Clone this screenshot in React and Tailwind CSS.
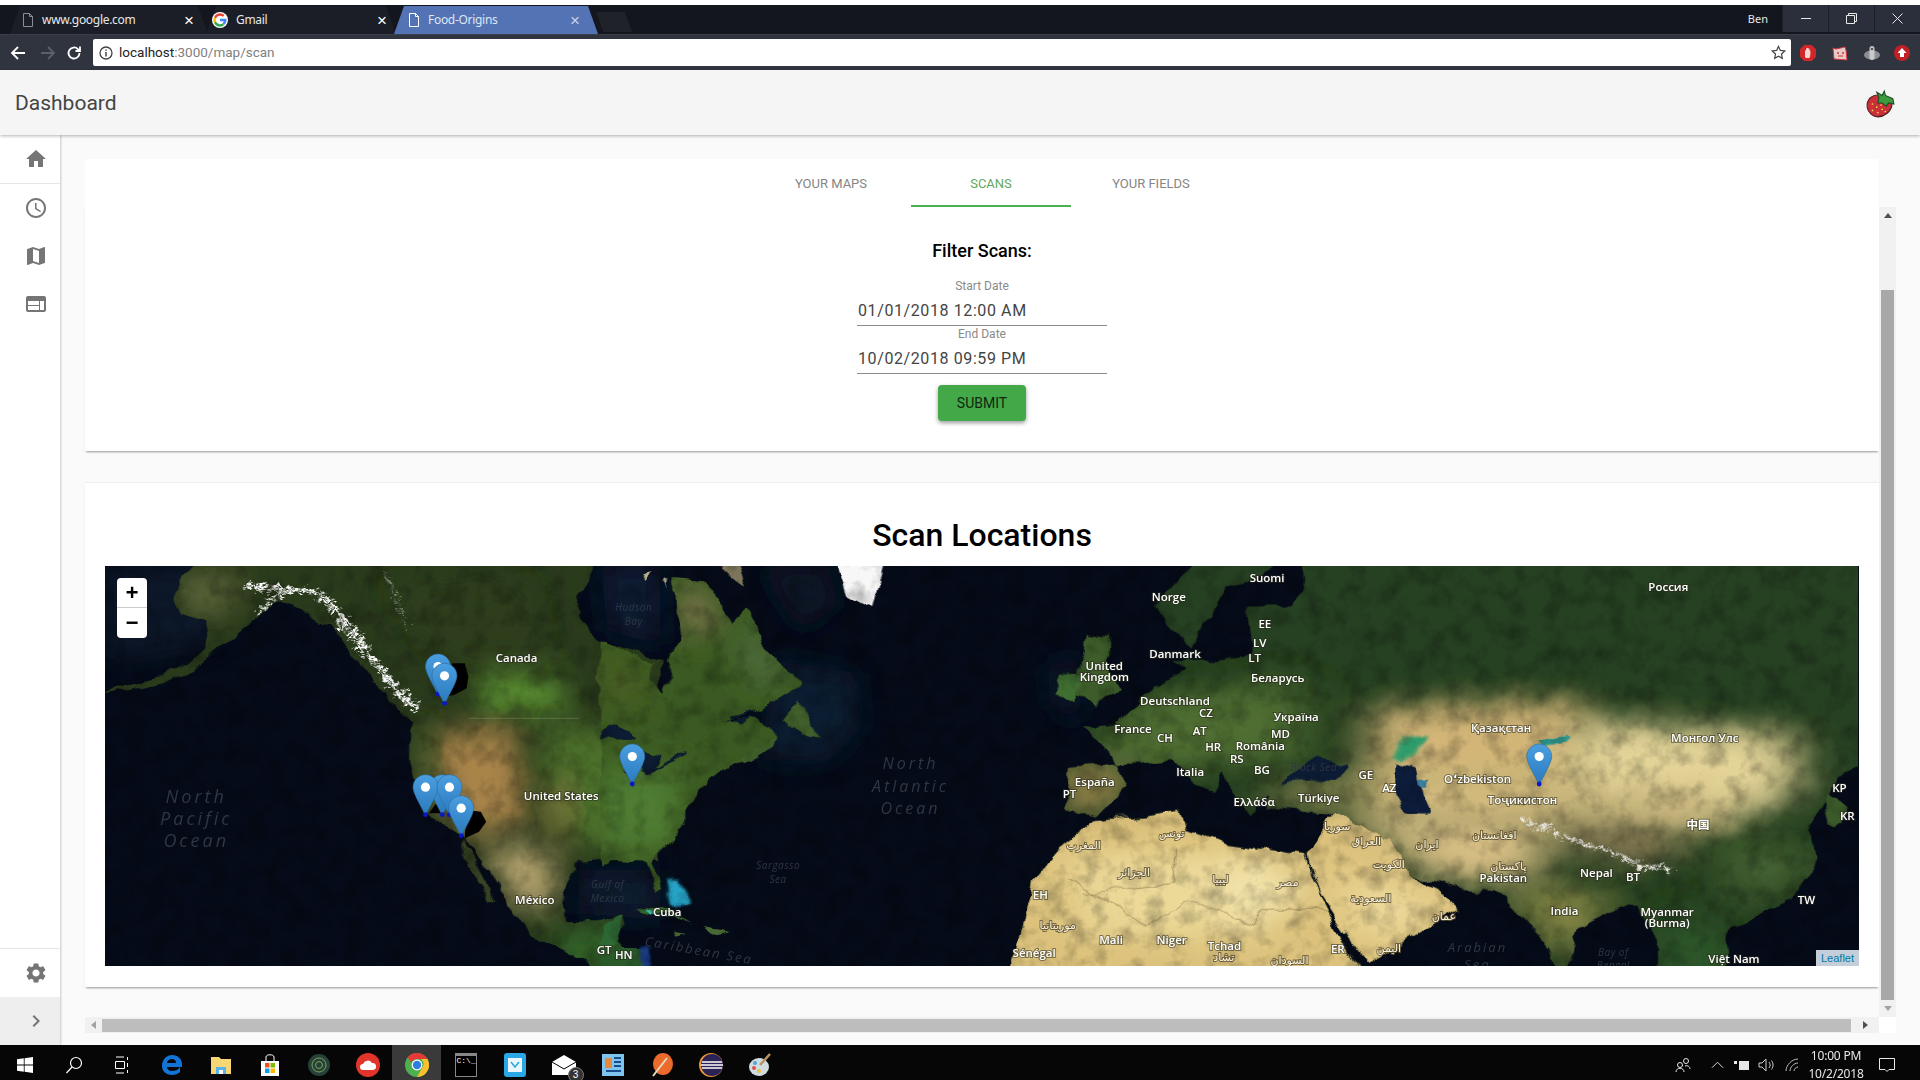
import React from "react";

const MAT = {
  home: "M10 20v-6h4v6h5v-8h3L12 3 2 12h3v8z",
  clock: "M11.99 2C6.47 2 2 6.48 2 12s4.47 10 9.99 10C17.52 22 22 17.52 22 12S17.52 2 11.99 2zM12 20c-4.42 0-8-3.58-8-8s3.58-8 8-8 8 3.58 8 8-3.58 8-8 8zm.5-13H11v6l5.25 3.15.75-1.23-4.5-2.67z",
  map: "M20.5 3l-.16.03L15 5.1 9 3 3.36 4.9c-.21.07-.36.25-.36.48V20.5c0 .28.22.5.5.5l.16-.03L9 18.9l6 2.1 5.64-1.9c.21-.07.36-.25.36-.48V3.5c0-.28-.22-.5-.5-.5zM15 19l-6-2.11V5l6 2.11V19z",
  web: "M20 4H4c-1.1 0-1.99.9-1.99 2L2 18c0 1.1.9 2 2 2h16c1.1 0 2-.9 2-2V6c0-1.1-.9-2-2-2zm-5 14H4v-4h11v4zm0-5H4V9h11v4zm5 5h-4V9h4v9z",
  settings: "M19.14 12.94c.04-.3.06-.61.06-.94 0-.32-.02-.64-.07-.94l2.03-1.58c.18-.14.23-.41.12-.61l-1.92-3.32c-.12-.22-.37-.29-.59-.22l-2.39.96c-.5-.38-1.03-.7-1.62-.94l-.36-2.54c-.04-.24-.24-.41-.48-.41h-3.84c-.24 0-.43.17-.47.41l-.36 2.54c-.59.24-1.13.57-1.62.94l-2.39-.96c-.22-.08-.47 0-.59.22L2.74 8.87c-.12.21-.08.47.12.61l2.03 1.58c-.05.3-.09.63-.09.94s.02.64.07.94l-2.03 1.58c-.18.14-.23.41-.12.61l1.92 3.32c.12.22.37.29.59.22l2.39-.96c.5.38 1.03.7 1.62.94l.36 2.54c.05.24.24.41.48.41h3.84c.24 0 .44-.17.47-.41l.36-2.54c.59-.24 1.13-.56 1.62-.94l2.39.96c.22.08.47 0 .59-.22l1.92-3.32c.12-.22.07-.47-.12-.61l-2.01-1.58zM12 15.6c-1.98 0-3.6-1.62-3.6-3.6s1.62-3.6 3.6-3.6 3.6 1.62 3.6 3.6-1.62 3.6-3.6 3.6z",
  chevron: "M10 6L8.59 7.41 13.17 12l-4.58 4.59L10 18l6-6z",
};

const MatIcon = ({ d }) => (
  <svg viewBox="0 0 24 24" className="w-6 h-6 fill-[#757575]">
    <path d={d} />
  </svg>
);

const FileIcon = ({ color }) => (
  <svg viewBox="0 0 12 14" className="w-3 h-3.5 shrink-0" fill="none" stroke={color} strokeWidth="1">
    <path d="M1.5 .5h6l3 3v10h-9zM7.5 .5v3h3" />
  </svg>
);

const GoogleG = () => (
  <svg viewBox="0 0 48 48" className="w-4 h-4 shrink-0">
    <circle cx="24" cy="24" r="24" fill="#fff" />
    <path fill="#ea4335" d="M24 11c3.400 0 6.300 1.200 8.500 3.300l5-5C34.200 6.200 29.500 4 24 4 16.200 4 9.500 8.500 6.200 15l5.800 4.500C13.600 14.600 18.400 11 24 11z" />
    <path fill="#4285f4" d="M43.500 24.500c0-1.400-.1-2.700-.4-4H24v7.600h11c-.5 2.500-1.900 4.600-4 6l5.800 4.500c3.500-3.200 6.700-8 6.700-14.100z" />
    <path fill="#fbbc05" d="M12 28.500c-.4-1.400-.7-2.900-.7-4.500s.3-3.100.7-4.500L6.200 15C4.800 17.700 4 20.800 4 24s.8 6.300 2.200 9z" />
    <path fill="#34a853" d="M24 44c5.400 0 10-1.800 12.800-4.900L31 34.600c-1.600 1.100-3.900 1.900-7 1.900-5.600 0-10.400-3.600-12-8.500L6.200 33C9.500 39.500 16.200 44 24 44z" />
  </svg>
);

const Tab = ({ width, pad, icon, title, active }) => (
  <div
    className={`h-[28px] flex items-center gap-[8px] -mr-[2px] [clip-path:polygon(0_100%,10px_0,calc(100%-10px)_0,100%_100%)] ${pad} ${
      active ? "bg-[#5373b4] text-[#dfe6f5]" : "bg-[#1b1e27] text-[#e8e8e8]"
    }`}
    style={{ width }}
  >
    {icon}
    <span className="flex-1 text-[12px] font-['Noto_Sans',sans-serif] tracking-[-0.3px]">{title}</span>
    <span className={`text-[17px] leading-none font-['Liberation_Sans',sans-serif] ${active ? "text-[#c6d2ea]" : "text-white"}`}>×</span>
  </div>
);

const WinButton = ({ children }) => (
  <div className="w-[46px] h-[27px] flex items-center justify-center border-l border-[#1c1f28] bg-[#2b2f3b]">{children}</div>
);

const ChromeBar = () => (
  <div className="shrink-0">
    <div className="h-[5px] bg-white" />
    <div className="h-[29px] bg-[#14161d] flex items-end pl-[10px]">
      <Tab width={198} pad="pl-[12px] pr-[14px]" icon={<FileIcon color="#8b8e96" />} title="www.google.com" />
      <Tab width={190} pad="pl-[6px] pr-[9px]" icon={<GoogleG />} title="Gmail" />
      <Tab width={204} pad="pl-[14px] pr-[18px]" active icon={<FileIcon color="#fff" />} title="Food-Origins" />
      <div className="w-[36px] h-[20px] mb-[2px] bg-[#1f2229] [clip-path:polygon(0_0,80%_0,100%_100%,20%_100%)]" />
      <div className="flex-1" />
      <span className="text-[11px] text-[#e8e8e8] font-['Noto_Sans',sans-serif] mr-[14px] self-center">Ben</span>
      <div className="flex self-start">
        <WinButton>
          <div className="w-[10px] h-px bg-[#e8e8e8]" />
        </WinButton>
        <WinButton>
          <svg viewBox="0 0 11 11" className="w-[11px] h-[11px]" fill="none" stroke="#e8e8e8">
            <path d="M.5 2.500h8v8h-8zM2.500 2.500v-2h8v8h-2" />
          </svg>
        </WinButton>
        <WinButton>
          <svg viewBox="0 0 11 11" className="w-[11px] h-[11px]" fill="none" stroke="#e8e8e8">
            <path d="M.5.5l10 10M10.500.5l-10 10" />
          </svg>
        </WinButton>
      </div>
    </div>
    <div className="h-[36px] bg-[#30343f] flex items-center border-t border-[#3b3f4b]">
      <svg viewBox="0 0 16 16" className="w-4 h-4 ml-[10px]" fill="none" stroke="#fff" strokeWidth="1.800">
        <path d="M15 8H2M8 2L2 8l6 6" />
      </svg>
      <svg viewBox="0 0 16 16" className="w-4 h-4 ml-[14px]" fill="none" stroke="#5b5f6a" strokeWidth="1.800">
        <path d="M1 8h13M8 2l6 6-6 6" />
      </svg>
      <svg viewBox="0 0 16 16" className="w-4 h-4 ml-[10px]" fill="none" stroke="#fff" strokeWidth="1.800">
        <path d="M13.500 8a5.500 5.500 0 1 1-1.600-3.900L14 6M14 1.500V6H9.500" />
      </svg>
      <div className="ml-[11px] w-[1698px] h-[27px] bg-white rounded-[2px] flex items-center pl-[6px] pr-[5px]">
        <svg viewBox="0 0 14 14" className="w-[14px] h-[14px] mr-[6px]" fill="none" stroke="#444">
          <circle cx="7" cy="7" r="6" strokeWidth="1.300" />
          <path d="M7 6v4.500M7 3.500v1.200" strokeWidth="1.500" />
        </svg>
        <span className="text-[13.5px] font-['Roboto',sans-serif] text-[#222]">localhost</span>
        <span className="text-[13.5px] font-['Roboto',sans-serif] text-[#808080]">:3000/map/scan</span>
        <div className="flex-1" />
        <svg viewBox="0 0 16 16" className="w-[15px] h-[15px]" fill="none" stroke="#444" strokeWidth="1.300">
          <path d="M8 1.500l2 4.300 4.700.6-3.500 3.200.9 4.700L8 12l-4.100 2.300.9-4.700L1.300 6.400 6 5.800z" />
        </svg>
      </div>
      <div className="flex items-center ml-[8px] gap-[14px]">
        <svg viewBox="0 0 18 18" className="w-[18px] h-[18px]">
          <path fill="#d3262b" d="M5.300 1h7.400L17 5.300v7.400L12.700 17H5.300L1 12.700V5.300z" />
          <path fill="#f3d7d2" d="M6 13V7c0-1 1-1 1 0V5c0-1 1-1 1 0V4.500c0-1 1.200-1 1.200 0V5c0-1 1.200-1 1.200 0v2c0-1 1-.8 1 0v3.500L10.500 14H7z" />
        </svg>
        <svg viewBox="0 0 18 18" className="w-[18px] h-[18px]">
          <path fill="#e9c9c6" stroke="#d0353a" d="M2 4l3 1 9-2 1 3 1 10-13-1z" />
          <circle cx="7" cy="9" r="1" fill="#d0353a" />
          <circle cx="12" cy="9" r="1" fill="#d0353a" />
          <path d="M7 12h5" stroke="#d0353a" />
        </svg>
        <svg viewBox="0 0 18 18" className="w-[18px] h-[18px]">
          <ellipse cx="9" cy="11" rx="8" ry="4.500" fill="#8d8f95" />
          <rect x="6.500" y="2" width="5" height="14" rx="2.500" fill="#c9c9cc" />
          <circle cx="9" cy="5" r="1.300" fill="#555" />
        </svg>
        <svg viewBox="0 0 18 18" className="w-[18px] h-[18px] -ml-[2px]">
          <circle cx="9" cy="9" r="8" fill="#bf2026" />
          <path fill="#fff" d="M9 4l4.500 5H11v4H7V9H4.500z" />
        </svg>
      </div>
    </div>
  </div>
);

const Strawberry = () => (
  <svg viewBox="0 0 28 28" className="w-[30px] h-[30px]">
    <path fill="#c9303a" stroke="#4a1f20" d="M5 8c4-3 9-3 13 0 5 0 8 4 7 8-1 5-7 10-13 10-4 0-9-3-10-9-.5-4 1-7 3-9z" />
    <path fill="#3c9a3f" stroke="#1d4d1f" d="M11 3l5 3 2-4 1 4 7 3 1 5-5-1-2 3-4-3-4 0 1-5z" />
    <g fill="#f2d34c">
      <circle cx="7" cy="14" r=".8" />
      <circle cx="11" cy="17" r=".8" />
      <circle cx="7" cy="20" r=".8" />
      <circle cx="12" cy="22" r=".8" />
      <circle cx="16" cy="19" r=".8" />
      <circle cx="19" cy="21" r=".8" />
      <circle cx="15" cy="15" r=".8" />
    </g>
  </svg>
);

// map data, traced from the reference in zoom coordinates
const Z7 = "translate(-5 -6) scale(0.35714 0.33333)";
const Z11 = "translate(495 -6) scale(0.33333 0.33333)";
const Z8 = "translate(895 -6) scale(0.56117 0.33333)";
const at7 = (x, y) => [100 + x / 2.8 - 105, 560 + y / 3 - 566];
const at11 = (x, y) => [600 + x / 3 - 105, 560 + y / 3 - 566];
const at8 = (x, y) => [1000 + x / 1.782 - 105, 560 + y / 3 - 566];

const NA_WEST = "205,120 225,50 300,-40 1400,-40 1345,100 1340,170 1385,240 1568,300 1568,900 1450,895 1340,905 1295,1000 1310,1080 1400,1085 1460,1060 1470,1090 1440,1130 1500,1300 1400,1300 1350,1190 1200,1130 1160,1050 1040,870 1010,830 910,760 870,600 870,490 810,420 740,340 650,190 500,130 400,210 300,300 170,370 15,405 15,395 170,350 300,270 290,190 205,150";
const BAJA = "1010,835 1040,890 1105,1030 1090,1020 1030,930";
const NA_EAST = "0,240 100,290 160,310 155,370 190,405 215,360 190,300 245,240 225,150 220,60 320,70 370,130 385,195 440,140 500,260 600,380 525,425 380,490 470,470 530,540 430,605 360,630 320,660 260,740 260,800 175,880 150,910 185,990 165,1000 135,905 40,900 0,920";
const EURASIA = "530,-40 1620,-40 1620,600 1530,620 1490,650 1470,730 1440,800 1450,900 1420,1000 1330,1090 1290,1130 1300,1300 1170,1300 1170,1140 1130,1040 1100,1040 1030,1100 1000,1300 980,1160 890,1000 820,990 790,970 730,950 640,820 590,760 480,745 480,700 445,770 420,720 400,640 380,700 330,640 310,600 250,610 220,610 120,620 115,750 170,770 220,680 190,570 150,500 210,490 260,400 330,330 310,300 400,300 450,280 440,130 520,130 540,90";
const SCANDI = "270,130 330,40 400,-40 530,-40 450,60 400,80 385,140 340,260 300,200";
const AFRICA = "5,1300 40,1080 60,960 110,860 170,780 250,770 320,755 330,810 400,850 460,865 540,885 570,1010 660,1300";
const ARABIA = "545,890 590,760 700,850 730,950 780,990 815,1050 740,1120 650,1210 570,1000";

const Blob = ({ points, fill, opacity = 1 }) => (
  <polygon points={points} fill={fill} opacity={opacity} filter="url(#soft)" />
);

const LABELS = [
  [at7, 1165, 292, "Canada"], [at7, 1290, 706, "United States"], [at7, 1216, 1018, "México"], [at7, 1410, 1168, "GT"], [at7, 1465, 1182, "HN"],
  [at11, 200, 1054, "Cuba"],
  [at8, 475, 52, "Suomi"], [at8, 300, 108, "Norge"], [at8, 471, 190, "EE"], [at8, 462, 248, "LV"], [at8, 453, 293, "LT"], [at8, 311, 280, "Danmark"],
  [at8, 185, 316, "United"], [at8, 185, 350, "Kingdom"], [at8, 494, 352, "Беларусь"], [at8, 311, 420, "Deutschland"], [at8, 366, 456, "CZ"], [at8, 527, 468, "Україна"],
  [at8, 236, 505, "France"], [at8, 293, 531, "CH"], [at8, 355, 511, "AT"], [at8, 379, 558, "HR"], [at8, 463, 556, "România"], [at8, 499, 520, "MD"], [at8, 421, 594, "RS"],
  [at8, 338, 634, "Italia"], [at8, 466, 628, "BG"], [at8, 168, 663, "España"], [at8, 123, 700, "PT"], [at8, 651, 642, "GE"], [at8, 693, 681, "AZ"], [at8, 567, 713, "Türkiye"],
  [at8, 452, 724, "Ελλάδα"], [at8, 892, 502, "Қазақстан"], [at8, 850, 654, "Oʻzbekiston"], [at8, 930, 718, "Тоҷикистон"], [at8, 1255, 531, "Монгол Улс"], [at8, 1190, 80, "Россия"],
  [at8, 1495, 682, "KP"], [at8, 1509, 767, "KR"], [at8, 1243, 792, "中国"], [at8, 1062, 936, "Nepal"], [at8, 1127, 950, "BT"], [at8, 896, 951, "Pakistan"], [at8, 1005, 1050, "India"],
  [at8, 1188, 1053, "Myanmar"], [at8, 1188, 1087, "(Burma)"], [at8, 1436, 1019, "TW"], [at8, 1307, 1195, "Việt Nam"], [at8, 197, 1137, "Mali"], [at8, 305, 1137, "Niger"], [at8, 399, 1157, "Tchad"],
  [at8, 60, 1176, "Sénégal"], [at8, 71, 1003, "EH"], [at8, 601, 1166, "ER"],
];

const ARABIC = [
  [305, 820, "تونس"], [148, 855, "المغرب"], [238, 938, "الجزائر"], [392, 958, "ليبيا"], [512, 968, "مصر"], [600, 800, "سوريا"], [652, 845, "العراق"], [692, 912, "الكويت"],
  [760, 852, "ایران"], [880, 825, "افغانستان"], [905, 918, "پاکستان"], [660, 1015, "السعودية"], [102, 1096, "موريتانيا"], [790, 1068, "عمان"], [692, 1165, "اليمن"], [515, 1200, "السودان"], [398, 1192, "تشاد"],
];

const SEAS = [
  [at7, 268, 708, "North", 18, 3], [at7, 268, 775, "Pacific", 18, 3], [at7, 268, 841, "Ocean", 18, 3],
  [at11, 930, 610, "North", 16, 3], [at11, 930, 678, "Atlantic", 16, 3], [at11, 930, 744, "Ocean", 16, 3],
  [at7, 1493, 142, "Hudson", 10, 0.5], [at7, 1493, 184, "Bay", 10, 0.5], [at7, 1420, 972, "Gulf of", 10, 0.5], [at7, 1420, 1013, "Mexico", 10, 0.5],
  [at11, 533, 915, "Sargasso", 10, 0.5], [at11, 533, 957, "Sea", 10, 0.5], [at8, 558, 620, "Black Sea", 10, 0.5],
  [at8, 850, 1160, "Arabian", 13, 2], [at8, 850, 1212, "Sea", 13, 2], [at8, 1092, 1177, "Bay of", 10, 0.5], [at8, 1092, 1215, "Bengal", 10, 0.5],
];

// tip of each pin, in screen pixels
const PINS = [[437.5, 695], [444, 704.3], [441.8, 815.7], [425, 815.7], [449, 815.7], [460.7, 836.7], [631.8, 785], [1538.7, 785]];

const Pin = ({ x, y }) => (
  <g transform={`translate(${x - 105 - 12.5} ${y - 566 - 41})`}>
    <path fill="url(#pin)" stroke="#2e6c97" strokeWidth=".6" d="M12.500 0C5.600 0 0 5.600 0 12.500 0 19 8 31 12.500 41 17 31 25 19 25 12.500 25 5.600 19.400 0 12.500 0z" />
    <circle cx="12.500" cy="12.500" r="4.600" fill="#fff" />
    <circle cx="12.500" cy="40" r="2.400" fill="#0a16c8" />
  </g>
);

const WorldMap = () => (
  <div className="relative h-[400px] mx-5 overflow-hidden bg-[#050b18]">
    <svg viewBox="0 0 1753 400" className="block w-full h-full">
      <defs>
        <filter id="soft" x="-60%" y="-60%" width="220%" height="220%">
          <feGaussianBlur stdDeviation="42" />
        </filter>
        <filter id="soft2" x="-30%" y="-30%" width="160%" height="160%">
          <feGaussianBlur stdDeviation="5" />
        </filter>
        <filter id="rough" filterUnits="userSpaceOnUse" x="0" y="0" width="1753" height="400">
          <feTurbulence type="fractalNoise" baseFrequency="0.04" numOctaves="3" seed="3" result="n" />
          <feDisplacementMap in="SourceGraphic" in2="n" scale="14" xChannelSelector="R" yChannelSelector="G" />
        </filter>
        <filter id="snow" filterUnits="userSpaceOnUse" x="-100" y="-100" width="3000" height="1600">
          <feTurbulence type="fractalNoise" baseFrequency="0.07" numOctaves="3" seed="11" result="n" />
          <feDisplacementMap in="SourceGraphic" in2="n" scale="45" xChannelSelector="R" yChannelSelector="G" />
        </filter>
        <filter id="grain" x="0" y="0" width="100%" height="100%">
          <feTurbulence type="fractalNoise" baseFrequency="0.05" numOctaves="4" seed="7" />
          <feColorMatrix values="0 0 0 0 0  0 0 0 0 0  0 0 0 0 0  0 0 0 2.200 -0.950" />
        </filter>
        <linearGradient id="pin" x1="0" y1="0" x2="0" y2="1">
          <stop offset="0" stopColor="#4a9fe0" />
          <stop offset="1" stopColor="#2a78bd" />
        </linearGradient>
        <clipPath id="clipW"><polygon points={NA_WEST} /><polygon points={BAJA} /></clipPath>
        <clipPath id="clipE"><polygon points={NA_EAST} /></clipPath>
        <clipPath id="clipA"><polygon points={EURASIA} /><polygon points={SCANDI} /><polygon points={AFRICA} /><polygon points={ARABIA} /></clipPath>
      </defs>

      {/* shallow water */}
      <g transform={Z7}>
        <Blob points="15,18 400,18 300,250 15,300" fill="#12253d" opacity=".5" />
        <Blob points="1400,18 1568,18 1568,260 1420,210" fill="#0d1c35" />
        <Blob points="1340,930 1568,930 1568,1080 1340,1060" fill="#0c1a30" />
      </g>
      <g transform={Z11}>
        <Blob points="520,300 760,340 780,500 680,600 480,600" fill="#0f2038" opacity=".8" />
        <Blob points="470,18 680,18 720,130 600,220" fill="#0a1526" />
        <Blob points="1340,320 1440,280 1440,500 1350,440" fill="#0d1d33" opacity=".7" />
      </g>

      <g filter="url(#rough)">
        {/* west of north america */}
        <g transform={Z7}>
          <g clipPath="url(#clipW)">
            <rect x="0" y="-100" width="1700" height="1500" fill="#2a3a1c" />
            <Blob points="210,40 400,40 360,160 240,170" fill="#5a6338" />
            <Blob points="800,60 1200,60 1250,300 950,300" fill="#2d3d1c" />
            <Blob points="1060,340 1280,340 1310,460 1060,460" fill="#5a9030" />
            <Blob points="930,520 1160,500 1200,780 1060,840 950,720" fill="#a98449" />
            <Blob points="880,490 930,490 920,720 890,720" fill="#3c5a28" />
            <Blob points="1230,500 1568,500 1568,880 1340,860 1260,720" fill="#4c702c" />
            <Blob points="1270,660 1320,660 1310,840 1260,820" fill="#9a8644" />
            <Blob points="1060,870 1260,860 1280,1040 1180,1040" fill="#bba872" />
            <Blob points="1230,1120 1460,1100 1480,1260 1350,1260" fill="#33662b" />
            <polyline points="400,75 480,80 560,85 620,105 680,180 730,250 780,320 850,420 890,450" fill="none" stroke="#fff" strokeWidth="26" strokeDasharray="5 3 13 4 3 8 7 2" filter="url(#snow)" />
            <polyline points="445,165 500,105 590,85" fill="none" stroke="#f2f4f0" strokeWidth="14" strokeDasharray="12 4 5 5" filter="url(#snow)" />
            <polyline points="800,40 830,110 860,220" fill="none" stroke="#c8ccc0" strokeWidth="16" strokeDasharray="3 9" opacity=".6" filter="url(#snow)" />
          </g>
        </g>

        {/* east of north america and the islands */}
        <g transform={Z11}>
          <g clipPath="url(#clipE)">
            <rect x="0" y="0" width="620" height="1100" fill="#3b5a22" />
            <Blob points="240,80 320,90 360,190 280,240 230,190" fill="#7a7449" />
            <Blob points="390,210 470,210 570,360 460,390" fill="#4e6c3a" />
            <Blob points="0,260 140,340 140,440 0,450" fill="#475c20" />
            <Blob points="0,620 240,620 240,860 0,880" fill="#4f7c30" />
            <polygon points="0,510 50,490 115,530 60,545 0,530" fill="#0b1a30" />
            <polygon points="68,590 100,590 115,650 95,670 70,640" fill="#0b1a30" />
            <polygon points="140,570 190,585 150,650 130,640" fill="#0b1a30" />
            <polyline points="140,650 200,610 260,585" fill="none" stroke="#0b1a30" strokeWidth="6" />
            <polygon points="390,470 480,450 420,500" fill="#0b1a30" />
          </g>
          <polygon points="550,490 600,420 655,530 570,510" fill="#405f2a" />
          <polygon points="430,590 530,535 520,560 440,610" fill="#40602c" />
          <polygon points="690,-40 860,-40 815,150 740,110" fill="#f7f7f7" />
          <polygon points="330,-40 400,-40 430,80 380,45" fill="#7c745a" />
          <polygon points="125,52 155,45 140,70" fill="#b9b28c" />
          <polygon points="188,70 203,65 200,90" fill="#c5bea0" />
          <polygon points="105,1050 160,1035 280,1090 200,1065" fill="#34632c" />
          <polygon points="310,1095 385,1110 330,1122" fill="#4a6a35" />
          <polygon points="215,1115 255,1122 225,1130" fill="#466535" />
          <polygon points="205,960 240,960 270,1030 215,1040" fill="#27a3c6" filter="url(#soft2)" />
          <polygon points="140,1045 160,1045 160,1060" fill="#2fc0c0" />
          <polygon points="0,1100 70,1060 50,1160 0,1170" fill="#2f6b34" />
          <polygon points="0,1170 130,1170 140,1300 0,1300" fill="#2c5a2c" />
          <polygon points="125,1165 155,1165 140,1300 125,1300" fill="#1c3f8a" filter="url(#soft2)" />
        </g>

        {/* europe, asia, africa */}
        <g transform={Z8}>
          <g clipPath="url(#clipA)">
            <rect x="0" y="-100" width="1700" height="1500" fill="#264020" />
            <polygon points={AFRICA} fill="#dcc27c" />
            <polygon points={ARABIA} fill="#dcc27c" />
            <Blob points="230,420 540,360 540,590 160,640" fill="#4f6e33" />
            <Blob points="100,620 220,610 200,760 110,760" fill="#a08a50" />
            <Blob points="480,670 640,660 640,740 490,740" fill="#8f8a52" />
            <Blob points="660,440 1040,420 1060,640 860,700 660,660" fill="#d2b577" />
            <Blob points="1040,480 1420,520 1420,700 1280,790 960,720" fill="#e4d498" />
            <Blob points="640,620 1040,620 1020,800 660,790" fill="#d3bb7d" />
            <Blob points="1000,680 1300,700 1280,820 980,790" fill="#cdb97f" />
            <Blob points="950,790 1200,810 1190,910 1030,880" fill="#93805a" />
            <Blob points="1280,860 1420,840 1420,970 1320,1030" fill="#4a6834" />
            <Blob points="900,980 1080,990 1050,1150 1000,1200" fill="#8f8e48" />
            <Blob points="1180,1050 1290,1110 1290,1300 1180,1300" fill="#2d5a2c" />
            <Blob points="600,760 980,770 960,960 780,970 690,850" fill="#d6be83" />
            <Blob points="120,880 480,880 480,1130 150,1130" fill="#ecd998" />
            <Blob points="380,920 520,920 510,1060 400,1080" fill="#f3e4ac" />
            <Blob points="600,920 780,1030 720,1120 660,1170" fill="#f0dd9f" />
            <polyline points="940,780 1000,830 1060,870 1130,905 1205,940" fill="none" stroke="#f0eee6" strokeWidth="16" strokeDasharray="4 3 9 5 2 6" filter="url(#snow)" />
            <polyline points="120,950 260,1100 330,1020 450,1090 470,1050 580,1050" fill="none" stroke="#6f5f3b" strokeWidth="2" opacity=".6" />
            <polyline points="310,870 310,970 150,1000" fill="none" stroke="#6f5f3b" strokeWidth="2" opacity=".6" />
          </g>
          <polygon points="150,220 190,230 190,330 215,400 170,430 130,390 140,350" fill="#3e5c2b" />
          <polygon points="110,340 150,350 130,420 100,400" fill="#3f6e30" />
          <polygon points="1470,700 1510,740 1490,810 1470,760" fill="#3b5a2b" />
          <polygon points="520,640 560,590 620,615 600,660 500,670" fill="#0b1b36" />
          <polygon points="700,610 740,625 755,720 765,760 720,760 700,700" fill="#0b1f3a" />
          <polygon points="720,530 760,530 735,590 695,600" fill="#2d9b6a" filter="url(#soft2)" />
          <polygon points="745,650 765,650 760,680 745,675" fill="#3a7fa0" />
          <polygon points="960,540 1020,530 1010,550 970,560" fill="#2f9a90" />
        </g>
      </g>

      <rect x="0" y="0" width="1753" height="400" filter="url(#grain)" opacity=".26" />

      <g transform={Z7}>
        <polyline points="1030,475 1340,475" fill="none" stroke="#b9b8a0" strokeWidth="1.500" opacity=".5" />
      </g>

      {/* the shadows of the pins come out solid black */}
      <g transform={Z7} fill="#000">
        <polygon points="985,310 1020,310 1030,350 1025,385 990,405 965,410" />
        <polygon points="1025,750 1065,755 1080,785 1060,815 1020,835" />
        <polygon points="920,760 960,760 950,715" />
      </g>

      <g fontFamily="'Open Sans', sans-serif" fontStyle="italic" fill="#2f3644" textAnchor="middle" dominantBaseline="central">
        {SEAS.map(([fn, x, y, text, size, spacing], i) => {
          const [px, py] = fn(x, y);
          return <text key={i} x={px} y={py} fontSize={size} letterSpacing={spacing}>{text}</text>;
        })}
        <text transform="translate(593.500 384) rotate(10)" fontSize="13" letterSpacing="2">Caribbean Sea</text>
      </g>
      <g fontFamily="'Open Sans', 'DejaVu Sans', 'Noto Sans CJK SC', sans-serif" fontWeight="600" fontSize="11.500" fill="#fff" textAnchor="middle" dominantBaseline="central" stroke="#2a2a1c" strokeOpacity=".55" strokeWidth="2" paintOrder="stroke">
        {LABELS.map(([fn, x, y, text], i) => {
          const [px, py] = fn(x, y);
          return <text key={i} x={px} y={py}>{text}</text>;
        })}
      </g>
      <g fontFamily="'DejaVu Sans', sans-serif" fontSize="11" fill="#f8f2de" textAnchor="middle" dominantBaseline="central" stroke="#5e5030" strokeOpacity=".8" strokeWidth="2" paintOrder="stroke">
        {ARABIC.map(([x, y, text], i) => {
          const [px, py] = at8(x, y);
          return <text key={i} x={px} y={py}>{text}</text>;
        })}
      </g>

      {PINS.map(([x, y], i) => <Pin key={i} x={x} y={y} />)}
    </svg>

    <div className="absolute left-3 top-3 w-[30px] rounded bg-white text-black font-['Liberation_Mono',monospace] font-bold text-[22px] leading-[34px] text-center">
      <div className="h-[30px] border-b border-[#ccc] overflow-hidden">+</div>
      <div className="h-[30px] overflow-hidden">−</div>
    </div>
    <div className="absolute right-0 bottom-0 h-4 px-[5px] bg-[#c3ced8] text-[#0078a8] font-['Liberation_Sans',sans-serif] text-[11px] leading-4">Leaflet</div>
  </div>
);

const DateField = ({ label, value }) => (
  <div className="w-[250px] h-[48px] flex flex-col border-b border-[#8a8a8a]">
    <div className="h-[16px] text-center text-[12px] leading-[16px] text-[#8a8a8a]">{label}</div>
    <div className="pl-px pt-[7px] text-[16px] leading-[20px] tracking-[0.6px] text-[#444]">{value}</div>
  </div>
);

const Arrow = ({ className }) => <div className={`w-0 h-0 ${className}`} />;

const Content = () => (
  <div className="flex-1 min-w-0 pl-[25px] pt-[24px] font-['Roboto',sans-serif]">
    <div className="h-[48px] w-[1793px] bg-white relative">
      <div className="absolute left-[666px] top-0 flex text-[13px] text-[#858585]">
        <div className="w-[160px] h-[48px] pt-[2px] flex items-center justify-center">YOUR MAPS</div>
        <div className="w-[160px] h-[48px] pt-[4px] flex items-center justify-center text-[#5fa862] border-b-2 border-[#4caf50]">SCANS</div>
        <div className="w-[160px] h-[48px] pt-[2px] flex items-center justify-center">YOUR FIELDS</div>
      </div>
    </div>
    <div className="flex h-[810px]">
      <div className="w-[1794px] shrink-0">
        <div className="h-[244px] bg-white shadow-[0_2px_2px_-1px_rgba(0,0,0,0.4)] flex flex-col items-center">
          <div className="mt-[32px] h-[24px] text-[18px] leading-[24px] font-medium text-black">Filter Scans:</div>
          <div className="mt-[15px]"><DateField label="Start Date" value="01/01/2018 12:00 AM" /></div>
          <DateField label="End Date" value="10/02/2018 09:59 PM" />
          <button className="mt-[11px] w-[88px] h-[36px] rounded bg-[#43a948] text-[14px] text-[#10280f] shadow-[0_2px_4px_rgba(0,0,0,0.4)]">SUBMIT</button>
        </div>
        <div className="mt-[31px] h-[505px] bg-white border-t border-[#eeeeee] shadow-[0_2px_2px_-1px_rgba(0,0,0,0.4)]">
          <h1 className="h-[83px] pt-[32px] text-center text-[32px] leading-[40px] font-medium text-black">Scan Locations</h1>
          <WorldMap />
        </div>
      </div>
      <div className="w-[17px] h-[810px] bg-[#f1f1f1] flex flex-col items-center">
        <div className="h-[17px] flex items-center justify-center">
          <Arrow className="border-x-[4px] border-x-transparent border-b-[5px] border-b-[#505050]" />
        </div>
        <div className="mt-[66px] w-[13px] h-[710px] bg-[#a8a8a8]" />
        <div className="flex-1 flex items-center justify-center">
          <Arrow className="border-x-[4px] border-x-transparent border-t-[5px] border-t-[#a3a3a3]" />
        </div>
      </div>
    </div>
    <div className="h-[16px] w-[1811px] flex">
      <div className="w-[1794px] bg-[#f1f1f1] flex items-center">
        <div className="w-[17px] flex justify-center">
          <Arrow className="border-y-[4px] border-y-transparent border-r-[5px] border-r-[#a3a3a3]" />
        </div>
        <div className="w-[1749px] h-[13px] bg-[#bdbdbd]" />
        <div className="flex-1 flex justify-center">
          <Arrow className="border-y-[4px] border-y-transparent border-l-[5px] border-l-[#505050]" />
        </div>
      </div>
      <div className="w-[17px] bg-white" />
    </div>
  </div>
);

const Sidebar = () => (
  <div className="w-[60px] shrink-0 bg-white flex flex-col shadow-[1px_0_2px_rgba(0,0,0,0.2)] z-10">
    <div className="h-[49px] flex items-center justify-center pl-[12px] border-b border-[#e6e6e6]"><MatIcon d={MAT.home} /></div>
    <div className="h-[48px] flex items-center justify-center pl-[12px]"><MatIcon d={MAT.clock} /></div>
    <div className="h-[48px] flex items-center justify-center pl-[12px]"><MatIcon d={MAT.map} /></div>
    <div className="h-[48px] flex items-center justify-center pl-[12px]"><MatIcon d={MAT.web} /></div>
    <div className="flex-1" />
    <div className="h-[49px] flex items-center justify-center pl-[12px] border-t border-[#e6e6e6]"><MatIcon d={MAT.settings} /></div>
    <div className="h-[48px] flex items-center justify-center pl-[12px] bg-[#eeeeee]"><MatIcon d={MAT.chevron} /></div>
  </div>
);

const TaskIcons = [
  <svg key="win" viewBox="0 0 16 16" className="w-4 h-4"><path fill="#fff" d="M0 2.300l6.800-1v6.300H0zM7.600 1.200L16 0v7.600H7.600zM0 8.400h6.800v6.300l-6.800-1zM7.600 8.400H16V16l-8.400-1.200z" /></svg>,
  <svg key="search" viewBox="0 0 18 18" className="w-[18px] h-[18px]" fill="none" stroke="#fff" strokeWidth="1.200"><circle cx="11" cy="7" r="5.500" /><path d="M7 11l-5.500 6" /></svg>,
  <svg key="tasks" viewBox="0 0 16 18" className="w-4 h-[18px]" fill="none" stroke="#fff"><path d="M1 1h8M1 17h8M.5 5.500h9v7h-9zM12.500 1v3M12.500 7v4M12.500 14v3" /></svg>,
  <svg key="edge" viewBox="0 0 22 22" className="w-[22px] h-[22px]"><path fill="#1273d6" d="M11 1C5 1 1 6 1 12c0 6 5 9 10 9 3 0 6-1 8-3v-5c-2 3-5 4-8 4-3 0-5-2-5-4h15v-3C21 5 17 1 11 1zM6 9c.5-3 3-4 5-4s4 1 4 4z" /></svg>,
  <svg key="folder" viewBox="0 0 22 22" className="w-[22px] h-[22px]"><path fill="#f7d774" d="M1 3h8l2 2h10v15H1z" /><path fill="#58b4e8" d="M6 13h10v7H6z" /><path fill="#fff" d="M9 16h4v4H9z" /></svg>,
  <svg key="store" viewBox="0 0 22 22" className="w-[22px] h-[22px]"><path fill="#fff" d="M2 7h18v15H2z" /><path fill="none" stroke="#fff" d="M7 7V3c0-3 8-3 8 0v4" /><path fill="#f25022" d="M6 9h4.500v4.500H6z" /><path fill="#7fba00" d="M11.500 9H16v4.500h-4.500z" /><path fill="#00a4ef" d="M6 14.500h4.500V19H6z" /><path fill="#ffb900" d="M11.500 14.500H16V19h-4.500z" /></svg>,
  <svg key="ring" viewBox="0 0 24 24" className="w-6 h-6" fill="none"><circle cx="12" cy="12" r="11" fill="#26403a" /><circle cx="12" cy="12" r="7" stroke="#7fa35a" /><circle cx="12" cy="12" r="3.500" stroke="#7fa35a" /></svg>,
  <svg key="cloud" viewBox="0 0 24 24" className="w-6 h-6"><circle cx="12" cy="12" r="12" fill="#e1352b" /><path fill="#fff" d="M7 17a3 3 0 0 1 0-6 5 5 0 0 1 9-1 3.500 3.500 0 0 1 1 7z" /></svg>,
  <svg key="chrome" viewBox="0 0 24 24" className="w-6 h-6"><circle cx="12" cy="12" r="12" fill="#4caf50" /><path fill="#e53935" d="M12 0a12 12 0 0 1 10.400 6H12a6 6 0 0 0-5.600 4L2.700 4.200A12 12 0 0 1 12 0z" /><path fill="#fbc02d" d="M22.400 6A12 12 0 0 1 12 24l5-9a6 6 0 0 0-1-9z" /><circle cx="12" cy="12" r="5.400" fill="#fff" /><circle cx="12" cy="12" r="4.200" fill="#2f7de1" /></svg>,
  <div key="cmd" className="w-[22px] h-[24px] bg-black border border-[#888] border-t-[3px] text-[8px] leading-[10px] text-white font-['Liberation_Mono',monospace] pl-px">C:\_</div>,
  <svg key="mailapp" viewBox="0 0 24 24" className="w-6 h-6"><rect x="1" y="0" width="22" height="24" rx="3" fill="#2aa7e6" /><rect x="5" y="5" width="14" height="14" fill="#eaf6fb" /><path d="M8 9l4 5 4-5" fill="none" stroke="#2aa7e6" strokeWidth="1.500" /></svg>,
  <div key="mail" className="relative w-6 h-5">
    <svg viewBox="0 0 24 20" className="w-6 h-5"><path fill="#fff" d="M0 7L12 0l12 7v13H0z" /><path d="M0 7l12 7 12-7" fill="none" stroke="#000" /></svg>
    <span className="absolute -right-2 -bottom-2 w-4 h-4 rounded-full bg-[#333] border border-[#777] text-[10px] leading-[14px] text-center text-white font-['Liberation_Sans',sans-serif]">3</span>
  </div>,
  <svg key="panel" viewBox="0 0 22 22" className="w-[22px] h-[22px]"><rect x="0" y="0" width="22" height="22" fill="#7fc4ee" /><rect x="3" y="4" width="7" height="10" fill="#e7883c" /><path d="M12 4h7M12 8h7M12 12h7M4 17h15" stroke="#174e8a" strokeWidth="2" /></svg>,
  <svg key="postman" viewBox="0 0 24 24" className="w-6 h-6"><ellipse cx="13" cy="11" rx="10" ry="11" fill="#ec6a2c" /><path d="M3 23L17 5" stroke="#e8d9bd" strokeWidth="2" /></svg>,
  <svg key="eclipse" viewBox="0 0 24 24" className="w-6 h-6"><circle cx="12" cy="12" r="12" fill="#e7983a" /><circle cx="13" cy="12" r="11" fill="#2c2255" /><path d="M3 9h20M2 12h22M3 15h20" stroke="#fff" strokeWidth="1.500" /></svg>,
  <svg key="paint" viewBox="0 0 24 24" className="w-6 h-6"><ellipse cx="11" cy="14" rx="10" ry="9" fill="#cfdde0" /><circle cx="7" cy="10" r="2" fill="#4aa3dc" /><circle cx="6" cy="15" r="2" fill="#d9534f" /><circle cx="11" cy="18" r="2" fill="#f0c040" /><path d="M12 12L22 1" stroke="#b89464" strokeWidth="2.500" /></svg>,
];

const Taskbar = () => (
  <div className="h-[35px] shrink-0 bg-[#060606] flex items-center text-white z-20">
    {TaskIcons.map((icon, i) => (
      <div key={i} className={`w-[49px] h-full pt-[5px] flex items-center justify-center ${i === 8 ? "bg-[#3a3a3a]" : ""}`}>{icon}</div>
    ))}
    <div className="flex-1" />
    <div className="h-full pt-[5px] flex items-center">
      <svg viewBox="0 0 16 16" className="w-4 h-4 mr-[20px]" fill="none" stroke="#e8e8e8"><circle cx="5" cy="8" r="2.500" /><path d="M1 15c0-5 8-5 8 0" /><circle cx="11" cy="4" r="2.500" /><path d="M10 9c3-1 5 1 5 3" /></svg>
      <svg viewBox="0 0 14 8" className="w-[13px] h-2 mr-[10px]" fill="none" stroke="#e8e8e8"><path d="M1 7l6-6 6 6" /></svg>
      <svg viewBox="0 0 16 12" className="w-4 h-3 mr-[8px]" fill="#e8e8e8"><path d="M5 2h10v9H5z" /><path d="M0 2h3v3H0z" /></svg>
      <svg viewBox="0 0 16 14" className="w-4 h-[14px] mr-[11px]" fill="none" stroke="#cfcfcf"><path d="M1 5h3l4-4v12l-4-4H1zM11 4c1.500 2 1.500 4 0 6M13.500 2.500c2 3 2 6 0 9" /></svg>
      <svg viewBox="0 0 14 14" className="w-[14px] h-[14px] mr-[6px]" fill="none" stroke="#bdbdbd"><path d="M1 13C1 7 7 1 13 1M5 13c0-4 4-8 8-8M9 13c0-2 2-4 4-4" /></svg>
      <div className="w-[62px] text-center text-[12px] leading-[18px] font-['Noto_Sans',sans-serif] text-[#e8e8e8] tracking-[-0.2px]">
        <div>10:00 PM</div>
        <div>10/2/2018</div>
      </div>
      <svg viewBox="0 0 16 16" className="w-4 h-4 ml-[12px] mr-[25px]" fill="none" stroke="#e8e8e8"><path d="M.5 1.500h15v11H10l-2 2-2-2H.5z" /></svg>
    </div>
  </div>
);

const App = () => (
  <div className="w-[1920px] h-[1080px] overflow-hidden flex flex-col bg-[#fafafa]">
    <ChromeBar />
    <div className="h-[65px] shrink-0 bg-[#f5f5f5] shadow-[0_1px_3px_rgba(0,0,0,0.3)] pt-[2px] flex items-center justify-between pl-[15px] pr-[25px] z-20">
      <span className="font-['Roboto',sans-serif] text-[21px] text-[#444]">Dashboard</span>
      <Strawberry />
    </div>
    <div className="flex-1 min-h-0 flex">
      <Sidebar />
      <Content />
    </div>
    <Taskbar />
  </div>
);

export default App;
